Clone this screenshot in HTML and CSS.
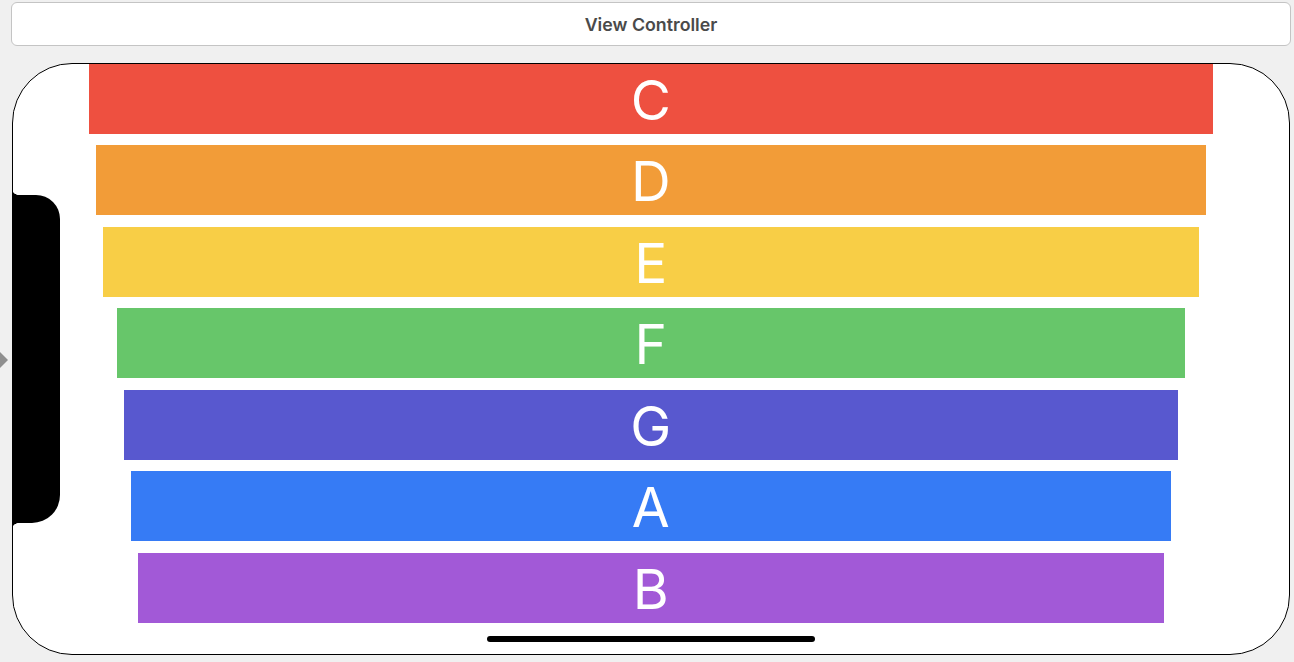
FILE: index.html
```html
<!DOCTYPE html>
<html lang="en">
<head>
<meta charset="utf-8">
<title>View Controller</title>
<link rel="stylesheet" href="styles.css">
</head>
<body>
  <header class="toolbar">View Controller</header>
  <div class="entry-arrow"></div>
  <main class="device">
    <div class="notch"></div>
    <div class="bars">
      <div class="bar bar-c">C</div>
      <div class="bar bar-d">D</div>
      <div class="bar bar-e">E</div>
      <div class="bar bar-f">F</div>
      <div class="bar bar-g">G</div>
      <div class="bar bar-a">A</div>
      <div class="bar bar-b">B</div>
    </div>
    <div class="home-indicator"></div>
  </main>
</body>
</html>
```

FILE: styles.css
```css
* { box-sizing: border-box; }

html, body {
  margin: 0;
  padding: 0;
}

body {
  width: 1294px;
  height: 662px;
  overflow: hidden;
  background: #f0f0f0;
  position: relative;
  font-family: "Liberation Sans", Arial, sans-serif;
}

.toolbar {
  margin: 2px 3px 0 11px;
  height: 44px;
  background: #ffffff;
  border: 1px solid #c4c4c4;
  border-radius: 6px;
  display: flex;
  align-items: center;
  justify-content: center;
  font-family: "Inter", "Liberation Sans", sans-serif;
  font-weight: 600;
  font-size: 17.8px;
  padding-top: 1px;
  color: #4a4a4a;
}

.entry-arrow {
  position: absolute;
  left: 0;
  top: 352px;
  width: 0;
  height: 0;
  border-top: 8px solid transparent;
  border-bottom: 8px solid transparent;
  border-left: 8px solid #8f8f8f;
}

.device {
  position: relative;
  margin: 17px 0 0 12px;
  width: 1277.5px;
  height: 592px;
  background: #ffffff;
  border: 1.5px solid #000;
  border-radius: 60px;
  display: flex;
  flex-direction: column;
}

.notch {
  position: absolute;
  left: -1.5px;
  top: 130.5px;
  width: 48px;
  height: 328px;
  background: #000;
  border-radius: 0 24px 28px 0;
}

.notch::before,
.notch::after {
  content: "";
  position: absolute;
  left: 0;
  width: 6px;
  height: 6px;
}

.notch::before {
  top: -6px;
  background: radial-gradient(circle at 100% 0, transparent 5.5px, #000 6px);
}

.notch::after {
  bottom: -6px;
  background: radial-gradient(circle at 100% 100%, transparent 5.5px, #000 6px);
}

.bars {
  display: flex;
  flex-direction: column;
  gap: 11.7px;
}

.bar {
  height: 69.8px;
  display: flex;
  align-items: center;
  justify-content: center;
  color: #ffffff;
  font-family: "Inter", "Liberation Sans", sans-serif;
  font-weight: 400;
  font-size: 55px;
  line-height: 1;
  padding-top: 3px;
}

.bar-c { margin: 0 75.5px; background: #ee5040; }
.bar-d { margin: 0 82.5px; background: #f29c38; }
.bar-e { margin: 0 89.5px; background: #f8ce46; }
.bar-f { margin: 0 103.5px; background: #67c66a; }
.bar-g { margin: 0 110.5px; background: #5858cf; }
.bar-a { margin: 0 118px; background: #367bf5; }
.bar-b { margin: 0 125px; background: #a259d7; }

.home-indicator {
  margin: 13px auto 0;
  width: 328px;
  height: 6px;
  border-radius: 3px;
  background: #000;
}
```
